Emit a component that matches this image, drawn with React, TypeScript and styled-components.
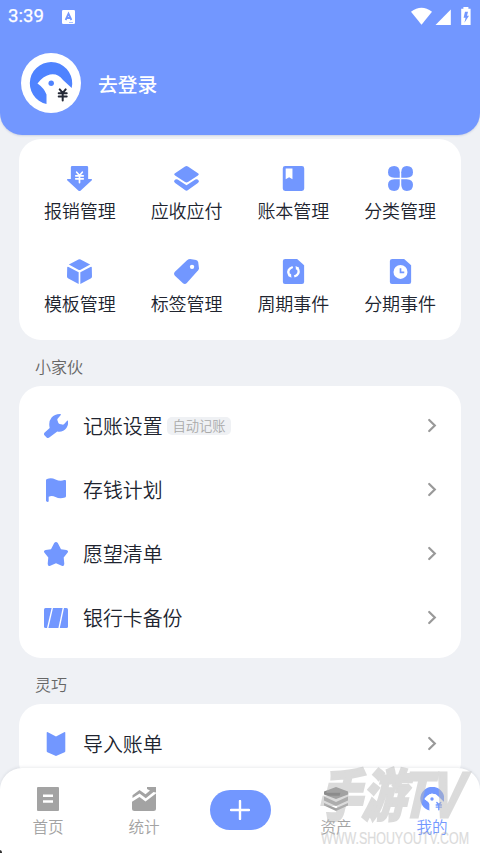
import React from 'react';
import styled, { createGlobalStyle } from 'styled-components';

const BLUE = '#7297ff';

const Global = createGlobalStyle`
  * { box-sizing: border-box; }
  html, body { margin: 0; padding: 0; overflow: hidden; }
  body { background: #eff1f5; font-family: "Noto Sans CJK SC", "Noto Sans", sans-serif; font-weight: 350; }
  svg { display: block; flex: none; }
`;

const Screen = styled.div`
  position: relative;
  width: 480px;
  height: 853px;
  display: flex;
  flex-direction: column;
  background: #eff1f5;
  overflow: hidden;
`;

const Header = styled.header`
  flex: none;
  height: 134.5px;
  background: ${BLUE};
  border-radius: 0 0 22px 22px;
  color: #fff;
  box-shadow: 0 1px 2px rgba(80, 100, 160, 0.2);
`;

const StatusBar = styled.div`
  display: flex;
  align-items: center;
  height: 33px;
  padding: 0 9px 0 8px;
`;

const Clock = styled.span`
  width: 54px;
  font: 400 18.6px/33px Roboto, sans-serif;
  -webkit-text-stroke: 0.25px #fff;
`;

const Signals = styled.div`
  display: flex;
  margin-left: auto;
`;

const Profile = styled.div`
  display: flex;
  align-items: center;
  gap: 17px;
  padding: 20px 21px 0;
`;

const Login = styled.span`
  padding-top: 2px;
  font-size: 19.8px;
  font-weight: 500;
  line-height: 30px;
`;

const Scroll = styled.main`
  flex: 1;
  min-height: 0;
  overflow: hidden;
  padding: 4px 19px 0;
`;

const Card = styled.section`
  background: #fff;
  border-radius: 22px;
  padding: 8px 0;
`;

const ToolGrid = styled(Card)`
  display: grid;
  grid-template-columns: repeat(4, 1fr);
  grid-auto-rows: 93px;
  height: 201.5px;
  padding: 27.5px 7.5px 0;
`;

const Tool = styled.div`
  display: flex;
  flex-direction: column;
  align-items: center;
`;

const ToolLabel = styled.span`
  margin-top: 6px;
  font-size: 18px;
  line-height: 26px;
  color: #20242f;
  white-space: nowrap;
`;

const SectionTitle = styled.h2`
  margin: 0;
  padding: 4px 16px 0;
  height: 46px;
  font-size: 16px;
  font-weight: 350;
  line-height: 44px;
  color: #666;
`;

const Row = styled.div`
  display: flex;
  align-items: center;
  height: 64px;
  padding: 0 23px 0 25px;
`;

const RowLabel = styled.span`
  margin-left: 15px;
  font-size: 19.9px;
  line-height: 30px;
  color: #20242f;
`;

const Tag = styled.span`
  margin-left: 4.5px;
  width: 64px;
  height: 18px;
  border-radius: 5px;
  background: #eff1f4;
  color: #aaa;
  font-size: 13.3px;
  line-height: 17px;
  text-align: center;
`;

const Arrow = styled.span`
  margin-left: auto;
`;

const TabBar = styled.nav`
  position: relative;
  flex: none;
  display: grid;
  grid-template-columns: repeat(5, 96px);
  height: 85.5px;
  background: #fff;
  border-radius: 22px 22px 0 0;
  box-shadow: 0 -1px 3px rgba(60, 70, 90, 0.1);
`;

const Tab = styled.div<{ $active?: boolean }>`
  display: flex;
  flex-direction: column;
  align-items: center;
  padding-top: 19px;
  color: ${p => (p.$active ? BLUE : '#a3a3a3')};
`;

const TabLabel = styled.span`
  margin-top: 3px;
  font-size: 15.6px;
  line-height: 24px;
`;

const AddButton = styled.button`
  align-self: start;
  justify-self: center;
  display: grid;
  place-items: center;
  margin-top: 22.5px;
  width: 61px;
  height: 40px;
  border: 0;
  padding: 0;
  border-radius: 20px;
  background: ${BLUE};
`;

const Watermark = styled.div`
  position: absolute;
  right: 4px;
  bottom: 4px;
  width: 160px;
  height: 88px;
  opacity: 0.5;
  color: #b8b8b8;
  pointer-events: none;
`;

const CornerMark = styled.div`
  position: absolute;
  left: -3px;
  bottom: -2px;
  width: 5px;
  height: 5px;
  border-radius: 50%;
  background: #333;
`;

const Icon = ({ size = 25, children }: { size?: number; children: React.ReactNode }) => (
  <svg width={size} height={size} viewBox="0 0 24 24" fill="currentColor" color={BLUE}>
    {children}
  </svg>
);

const Yuan = ({ x, y, s, color, w }: { x: number; y: number; s: number; color: string; w: number }) => (
  <path
    transform={`translate(${x} ${y}) scale(${s})`}
    d="M-3-5 0-1.5 3-5M-4-1.2H4M-4 2H4M0-1.5V6"
    fill="none"
    stroke={color}
    strokeWidth={w}
    strokeLinecap="round"
  />
);

const Avatar = () => (
  <svg width="60" height="60" viewBox="0 0 60 60">
    <circle cx="30" cy="30" r="30" fill="#fff" />
    <path d="M25.5 51V41.5Q23 35 16.5 30.5Q22 23 29 21.5Q37 20 42 27L50.7 35A21.2 21.2 0 1 0 25.5 51Z" fill="#4f83ff" />
    <circle cx="30.2" cy="30.2" r="2.7" fill="#4f83ff" />
    <Yuan x={41.7} y={41.4} s={1} color="#242936" w={2} />
  </svg>
);

const filePath = 'M4 0H15.5L22.2 6V22a2 2 0 0 1-2 2H3.8a2 2 0 0 1-2-2V2Q1.8 0 4 0Z';

const tools: { label: string; icon: React.ReactNode }[] = [
  {
    label: '报销管理',
    icon: (
      <>
        <path d="M5 0h14q1.3 0 1.3 1.3V12.5H23q1.8 0 .6 1.5L13.2 23.4q-1.2 1-2.4 0L.4 14Q-.8 12.5 1 12.5h2.7V1.3Q3.7 0 5 0Z" />
        <Yuan x={12} y={10.5} s={0.9} color="#fff" w={1.8} />
      </>
    ),
  },
  {
    label: '应收应付',
    icon: (
      <>
        <path d="M10.6.5q1.4-.8 2.8 0L23 6.9q1.6 1 0 2.1l-9.6 6.4q-1.4.8-2.8 0L1 9q-1.6-1.1 0-2.1Z" />
        <path d="M1.3 13q1.1-.7 2.2 0l8.5 5.5 8.5-5.5q1.1-.7 2.2 0 2.4 1.7.2 3.3l-9.4 6.8q-1.5 1.1-3 0L1.1 16.3q-2.2-1.6.2-3.3Z" />
      </>
    ),
  },
  {
    label: '账本管理',
    icon: (
      <>
        <path d="M4 0h16a2.3 2.3 0 0 1 2.3 2.3v19.4A2.3 2.3 0 0 1 20 24H4a2.3 2.3 0 0 1-2.3-2.3V2.3A2.3 2.3 0 0 1 4 0Z" />
        <path d="M4.5 2.3H11v10.4l-3.2-2-3.3 2Z" fill="#fff" />
      </>
    ),
  },
  {
    label: '分类管理',
    icon: (
      <>
        <path d="M6 0Q11 0 11.3 6v5.3H6Q0 11 0 6 0 0 6 0Z" />
        <path d="M18 0q6 0 6 6 0 5-6 5.3h-5.3V6Q13 0 18 0Z" />
        <path d="M6 24q-6 0-6-6 0-5 6-5.3h5.3V18Q11 24 6 24Z" />
        <path d="M18 24q6 0 6-6 0-5-6-5.3h-5.3V18q.3 6 5.3 6Z" />
      </>
    ),
  },
  {
    label: '模板管理',
    icon: (
      <>
        <path d="M11 .4q1-.5 2 0l9.2 4.8-9.1 5q-1.1.5-2.2 0l-9.1-5Z" />
        <path d="M.2 7.9q.3-.8 1.3-.3L11.2 12.7V24L1.3 18.8Q0 18.2 0 16.8Z" />
        <path d="M23.8 7.9q-.3-.8-1.3-.3L12.8 12.7V24l9.9-5.2Q24 18.2 24 16.8Z" />
      </>
    ),
  },
  {
    label: '标签管理',
    icon: (
      <>
        <path d="M12.5 1.2Q14 0 15.5 0l5.7 1q1.6.3 2 1.8l.8 6q0 1.1-.8 2L12.3 23q-1.8 1.7-3.7.2L.9 16.1q-1.7-1.9 0-3.8Z" />
        <circle cx="17.3" cy="7.5" r="2.1" fill="#fff" />
      </>
    ),
  },
  {
    label: '周期事件',
    icon: (
      <>
        <path d={filePath} />
        <g fill="none" stroke="#fff" strokeWidth="2.2">
          <path d="M11.3 7.7Q5.8 9.7 7.4 14.3L8.6 16.4" />
          <path d="M12.7 16.8Q18.2 14.8 16.6 10.2L15.4 8.1" />
        </g>
        <path d="m6.8 16 2.8-2.1.4 4ZM17.2 8.5l-2.8 2.1-.4-4Z" fill="#fff" />
      </>
    ),
  },
  {
    label: '分期事件',
    icon: (
      <>
        <path d={filePath} />
        <circle cx="12" cy="12.4" r="6.7" fill="#fff" />
        <path d="M12 8.8v4h3.6" fill="none" stroke={BLUE} strokeWidth="1.6" />
      </>
    ),
  },
];

const settings: { label: string; tag?: string; icon: React.ReactNode }[] = [
  {
    label: '记账设置',
    tag: '自动记账',
    icon: (
      <path d="M15.8 0q1.8.1 1 1.1l-3 3.3q-.8.9-.3 2l.8 2.4q.3 1 1.4 1.2l2.6.6q1.1.2 1.9-.7l2.7-3q1.1-.8 1.3.6.2 6.5-4.9 9.3-3 1.5-6 .8L5.6 23.3q-1.5 1.3-3 .1L.7 21.6q-1.5-1.5 0-3l5-4.5Q4.2 7.6 7.6 3.5 10.6.1 15.8 0Z" />
    ),
  },
  {
    label: '存钱计划',
    icon: <path d="M2 2.2Q2 1.3 3 1q4-1.9 8.5.4 4.5 2.1 8.8.7 1.7-.5 1.7 1v15q0 1.1-1 1.4-5.1 1.8-9.5-.4-3.6-1.8-6.8-.3v4.1q0 1-1.2 1T2 22.8Z" />,
  },
  {
    label: '愿望清单',
    icon: <path d="M10.2 1.1q1.8-2.2 3.6 0L17 7.3l5.3.8q2.7.6 1.2 2.6L19.7 15.4l.6 6.3q0 2.8-2.6 2L12 21.2l-5.7 2.5q-2.6.8-2.6-2l.6-6.3L.5 10.7Q-1 8.7 1.7 8.1L7 7.3Z" />,
  },
  {
    label: '银行卡备份',
    icon: (
      <>
        <path d="M1.5 2H7.6L3 22H1.5Q0 22 0 20.5v-17Q0 2 1.5 2Z" />
        <path d="M9 2h9.6l-4.2 20H4.4Z" />
        <path d="M20 2h2.5Q24 2 24 3.5v17q0 1.5-1.5 1.5H15.8Z" />
      </>
    ),
  },
];

const SettingRow = ({ label, tag, icon }: { label: string; tag?: string; icon: React.ReactNode }) => (
  <Row>
    <Icon size={24}>{icon}</Icon>
    <RowLabel>{label}</RowLabel>
    {tag && <Tag>{tag}</Tag>}
    <Arrow>
      <svg width="12" height="16" viewBox="0 0 12 16">
        <path d="M3.2 2 8.8 7.5 3.2 13" fill="none" stroke="#999" strokeWidth="2.2" strokeLinecap="round" />
      </svg>
    </Arrow>
  </Row>
);

const TabIcon = ({ children }: { children: React.ReactNode }) => (
  <svg width="24" height="24" viewBox="0 0 24 24" fill="currentColor">{children}</svg>
);

export default function App() {
  return (
    <Screen>
      <Global />
      <Header>
        <StatusBar>
          <Clock>3:39</Clock>
          <svg width="13" height="14" viewBox="0 0 13 14">
            <rect width="13" height="14" rx="1.3" fill="#fff" />
            <path d="m3.6 10 2.9-6.3L9.4 10M4.8 8h3.4" fill="none" stroke={BLUE} strokeWidth="1.8" />
            <path d="M7 12.5h4" stroke={BLUE} strokeWidth=".6" />
          </svg>
          <Signals>
            <svg width="61" height="20" viewBox="0 0 61 20" fill="#fff">
              <path d="M1 4.8Q11.5-3.2 22 4.8L11.5 17.7Z" />
              <path d="M40.8 2.5v15.4H25.5Z" />
              <path d="M51.2 1.7h2.2V0h5v1.7h2.2v16.2h-9.4Z" />
              <path d="M55 4.8h3l-1 4h2l-4.6 7 1.2-5h-2Z" fill={BLUE} />
            </svg>
          </Signals>
        </StatusBar>
        <Profile>
          <Avatar />
          <Login>去登录</Login>
        </Profile>
      </Header>
      <Scroll>
        <ToolGrid>
          {tools.map(t => (
            <Tool key={t.label}>
              <Icon>{t.icon}</Icon>
              <ToolLabel>{t.label}</ToolLabel>
            </Tool>
          ))}
        </ToolGrid>
        <SectionTitle>小家伙</SectionTitle>
        <Card>
          {settings.map(s => <SettingRow key={s.label} {...s} />)}
        </Card>
        <SectionTitle>灵巧</SectionTitle>
        <Card>
          <SettingRow
            label="导入账单"
            icon={<path d="M2.7.8q0-1.1 1.2-.5L12 4.5 20.1.3q1.2-.6 1.2.5v18.4q0 .7-.7 1L12 24l-8.6-3.8q-.7-.3-.7-1Z" />}
          />
        </Card>
      </Scroll>
      <TabBar>
        <Tab>
          <TabIcon>
            <path fillRule="evenodd" d="M2 0h20q1 0 1 1v22q0 1-1 1H2q-1 0-1-1V1q0-1 1-1Zm5 7.5V10h10V7.5Zm0 5.8v2.4h10v-2.4Z" />
          </TabIcon>
          <TabLabel>首页</TabLabel>
        </Tab>
        <Tab>
          <TabIcon>
            <path d="M.5 8.2 7.5 3l6 4.3L18 3.5 15 2V0h9v5.5L21.5 5l-7.7 6.3-6.2-4.7L.5 11Z" />
            <path d="M0 14.8 7.5 10l6 4.5L24 6.5v15q0 2.5-2.5 2.5h-19Q0 24 0 21.5Z" />
          </TabIcon>
          <TabLabel>统计</TabLabel>
        </Tab>
        <AddButton aria-label="添加">
          <svg width="20" height="20" viewBox="0 0 20 20">
            <path d="M10 1v18M1 10h18" stroke="#fff" strokeWidth="2.4" strokeLinecap="round" />
          </svg>
        </AddButton>
        <Tab>
          <TabIcon>
            <path d="M12 0 24 4.5v3L12 12 0 7.5v-3Z" fill="#8c8c8c" />
            <path d="M0 9.5v4L12 19l12-5.5v-4L12 15Z" />
            <path d="M0 16v2.5L12 24l12-5.5V16l-12 5.2Z" />
          </TabIcon>
          <TabLabel>资产</TabLabel>
        </Tab>
        <Tab $active>
          <TabIcon>
            <path d="M9.6 23.5V17Q8.5 14.5 4.5 12q2.5-4 6.9-5.2 4.2-.7 7.4 3.2l5.1 5A12 12 0 1 0 9.6 23.5Z" />
            <path d="M4.5 12q2.5-4 6.9-5.2 4.2-.7 7.4 3.2l5.1 5Q23 24 9.6 23.5V17Q8.5 14.5 4.5 12Z" fill="#fff" />
            <circle cx="12" cy="12" r="1.7" />
            <Yuan x={18.8} y={18.8} s={0.65} color={BLUE} w={2.2} />
          </TabIcon>
          <TabLabel>我的</TabLabel>
        </Tab>
        <Watermark>
          <svg width="160" height="88" viewBox="0 0 160 88" fill="currentColor" stroke="currentColor" overflow="visible">
            <g transform="translate(4 56) skewX(-13)" fontWeight="900" fontFamily="Noto Sans CJK SC, sans-serif">
              <text x="-3" y="-1" fontSize="56" strokeWidth="2.4" textLength="88" lengthAdjust="spacingAndGlyphs">手游</text>
              <text x="80" y="0" fontSize="64" strokeWidth="3" fontFamily="Liberation Sans, sans-serif" textLength="60" lengthAdjust="spacingAndGlyphs">TV</text>
            </g>
            <text x="5" y="82.5" fontSize="17" strokeWidth=".2" fontFamily="Liberation Sans, sans-serif" textLength="148" lengthAdjust="spacingAndGlyphs">WWW.SHOUYOUTV.COM</text>
          </svg>
        </Watermark>
      </TabBar>
      <CornerMark />
    </Screen>
  );
}
